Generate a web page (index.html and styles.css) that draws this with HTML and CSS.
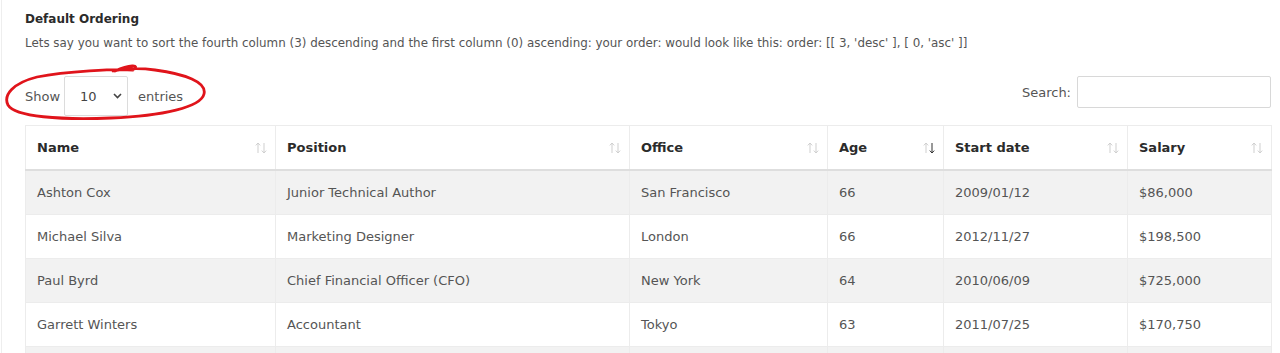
FILE: index.html
```html
<!DOCTYPE html>
<html lang="en">
<head>
<meta charset="utf-8">
<title>Default Ordering</title>
<link rel="stylesheet" href="styles.css">
</head>
<body>
<div class="card">
  <h4 class="title">Default Ordering</h4>
  <p class="desc">Lets say you want to sort the fourth column (3) descending and the first column (0) ascending: your order: would look like this: order: [[ 3, 'desc' ], [ 0, 'asc' ]]</p>
  <div class="controls">
    <div class="length">
      <span class="lbl-show">Show</span>
      <div class="select"><span>10</span><svg class="chev" width="9" height="6" viewBox="0 0 9 6"><path d="M1 1l3.5 3.5L8 1" fill="none" stroke="#444" stroke-width="1.6"/></svg></div>
      <span class="lbl-entries">entries</span>
      <svg class="scribble" width="208" height="62" viewBox="0 0 208 62"><path d="M112 9 C 126 3, 138 2, 130 8 C 112 7, 64 9, 34 15 C 10 21, 0 33, 5 43 C 12 55, 58 58, 108 56 C 160 54, 198 45, 201 32 C 204 20, 182 12, 152 8 C 138 6, 124 6, 110 9" fill="none" stroke="#e0141b" stroke-width="2.8" stroke-linecap="round"/></svg>
    </div>
    <label class="search">Search: <span class="input"></span></label>
  </div>
  <table class="grid">
    <colgroup>
      <col class="c1"><col class="c2"><col class="c3"><col class="c4"><col class="c5"><col class="c6">
    </colgroup>
    <thead>
      <tr>
        <th>Name<svg class="arrows" width="14" height="12" viewBox="0 0 14 12"><path class="up" d="M4 11V1M1.8 3.4L4 1l2.2 2.4"/><path class="dn" d="M10 1v10M7.8 8.6L10 11l2.2-2.4"/></svg></th>
        <th>Position<svg class="arrows" width="14" height="12" viewBox="0 0 14 12"><path class="up" d="M4 11V1M1.8 3.4L4 1l2.2 2.4"/><path class="dn" d="M10 1v10M7.8 8.6L10 11l2.2-2.4"/></svg></th>
        <th>Office<svg class="arrows" width="14" height="12" viewBox="0 0 14 12"><path class="up" d="M4 11V1M1.8 3.4L4 1l2.2 2.4"/><path class="dn" d="M10 1v10M7.8 8.6L10 11l2.2-2.4"/></svg></th>
        <th class="desc-col">Age<svg class="arrows" width="14" height="12" viewBox="0 0 14 12"><path class="up" d="M4 11V1M1.8 3.4L4 1l2.2 2.4"/><path class="dn" d="M10 1v10M7.8 8.6L10 11l2.2-2.4"/></svg></th>
        <th>Start date<svg class="arrows" width="14" height="12" viewBox="0 0 14 12"><path class="up" d="M4 11V1M1.8 3.4L4 1l2.2 2.4"/><path class="dn" d="M10 1v10M7.8 8.6L10 11l2.2-2.4"/></svg></th>
        <th>Salary<svg class="arrows" width="14" height="12" viewBox="0 0 14 12"><path class="up" d="M4 11V1M1.8 3.4L4 1l2.2 2.4"/><path class="dn" d="M10 1v10M7.8 8.6L10 11l2.2-2.4"/></svg></th>
      </tr>
    </thead>
    <tbody>
      <tr class="odd"><td>Ashton Cox</td><td>Junior Technical Author</td><td>San Francisco</td><td>66</td><td>2009/01/12</td><td>$86,000</td></tr>
      <tr><td>Michael Silva</td><td>Marketing Designer</td><td>London</td><td>66</td><td>2012/11/27</td><td>$198,500</td></tr>
      <tr class="odd"><td>Paul Byrd</td><td>Chief Financial Officer (CFO)</td><td>New York</td><td>64</td><td>2010/06/09</td><td>$725,000</td></tr>
      <tr><td>Garrett Winters</td><td>Accountant</td><td>Tokyo</td><td>63</td><td>2011/07/25</td><td>$170,750</td></tr>
      <tr class="odd"><td>&nbsp;</td><td>&nbsp;</td><td>&nbsp;</td><td>&nbsp;</td><td>&nbsp;</td><td>&nbsp;</td></tr>
    </tbody>
  </table>
</div>
</body>
</html>
```
FILE: styles.css
```css
html, body {
  margin: 0;
  padding: 0;
  background: #fff;
  overflow: hidden;
  height: 353px;
}
body {
  font-family: "DejaVu Sans", "Noto Sans", sans-serif;
  color: #555;
}
.card {
  margin-left: 1px;
  border-left: 1px solid #eeeeee;
  padding: 9px 9px 0 23px;
  height: 353px;
  box-sizing: border-box;
  overflow: hidden;
}
.title {
  margin: 0;
  font-size: 12px;
  line-height: 20px;
  font-weight: 700;
  color: #2b2b2b;
}
.desc {
  margin: 4px 0 0;
  font-size: 11.9px;
  line-height: 20px;
  color: #555;
  white-space: nowrap;
}
.controls {
  margin-top: 23px;
  display: flex;
  justify-content: space-between;
  align-items: flex-start;
  font-size: 13px;
  color: #555;
}
.length {
  position: relative;
  display: flex;
  align-items: center;
  height: 40px;
}
.lbl-show {
  margin-right: 4px;
}
.lbl-entries {
  margin-left: 10px;
}
.select {
  width: 64px;
  height: 40px;
  box-sizing: border-box;
  border: 1px solid #dcdcdc;
  border-radius: 2px;
  display: flex;
  align-items: center;
  justify-content: space-between;
  padding: 0 5px 0 15px;
  color: #444;
}
.scribble {
  position: absolute;
  left: -22px;
  top: -14px;
}
.search {
  display: flex;
  align-items: center;
  gap: 6px;
  height: 32px;
}
.input {
  width: 194px;
  height: 32px;
  box-sizing: border-box;
  border: 1px solid #d8d8d8;
  border-radius: 2px;
}
.grid {
  margin-top: 9px;
  width: 1246px;
  table-layout: fixed;
  border-collapse: collapse;
  border: 1px solid #ececec;
  font-size: 13px;
}
.c1 { width: 250px; }
.c2 { width: 354px; }
.c3 { width: 198px; }
.c4 { width: 116px; }
.c5 { width: 184px; }
.c6 { width: 144px; }
.grid th, .grid td {
  border: 1px solid #ececec;
  padding: 12px 11px;
  line-height: 19px;
  text-align: left;
  white-space: nowrap;
}
.grid th {
  color: #2b2b2b;
  font-weight: 700;
  border-bottom: 2px solid #dedede;
  position: relative;
}
.grid td {
  color: #555;
}
.grid tr.odd td {
  background: #f2f2f2;
}
.arrows {
  position: absolute;
  right: 7px;
  top: 16px;
}
.arrows path {
  fill: none;
  stroke: #cfcfcf;
  stroke-width: 1;
}
.desc-col .arrows .dn {
  stroke: #333;
}
```
